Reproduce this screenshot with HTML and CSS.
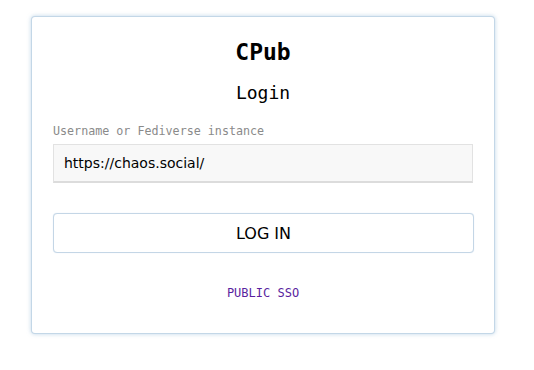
FILE: index.html
```html
<!DOCTYPE html>
<html>
<head>
<meta charset="utf-8">
<link rel="stylesheet" href="styles.css">
</head>
<body>
<div class="card">
  <h1 class="title">CPub</h1>
  <h2 class="subtitle">Login</h2>
  <form class="form">
    <label class="label" for="u">Username or Fediverse instance</label>
    <input class="input" id="u" type="text" value="https://chaos.social/">
    <button class="btn" type="button">LOG IN</button>
  </form>
  <a class="sso" href="#">PUBLIC SSO</a>
</div>
</body>
</html>
```
FILE: styles.css
```css
html, body { margin: 0; padding: 0; background: #fff; }
body { padding: 17px 40px 30px 32px; font-family: "DejaVu Sans", sans-serif; }
.card {
  width: 462px;
  box-sizing: border-box;
  background: #fff;
  border-radius: 3px;
  box-shadow: 0 0 0 1px #c3d7e7, 0 0 4px 1px rgba(140,180,212,0.55);
  padding: 0 21px 32px;
  display: flex;
  flex-direction: column;
  align-items: stretch;
}
.title {
  font-family: "DejaVu Sans Mono", monospace;
  font-weight: bold;
  font-size: 23px;
  text-align: center;
  margin: 21px 0 0;
  line-height: 28px;
  color: #000;
}
.subtitle {
  font-family: "DejaVu Sans Mono", monospace;
  font-weight: normal;
  font-size: 18px;
  text-align: center;
  margin: 16px 0 0;
  line-height: 22px;
  color: #000;
}
.form { display: flex; flex-direction: column; margin-top: 19px; }
.label {
  font-family: "DejaVu Sans Mono", monospace;
  font-size: 11.7px;
  color: #8a8a8a;
  line-height: 16px;
}
.input {
  margin-top: 5px;
  height: 39px;
  box-sizing: border-box;
  background: #f8f8f8;
  border: 1px solid #e2e2e2;
  border-bottom: 2px solid #dcdcdc;
  padding: 0 10px;
  font-family: "DejaVu Sans", sans-serif;
  font-size: 14px;
  color: #000;
  outline: none;
}
.btn {
  margin-top: 30px;
  height: 40px;
  background: #fff;
  border: 1px solid #c4d6e6;
  border-radius: 4px;
  box-shadow: 0 0 1px #d0e0ee;
  font-family: "DejaVu Sans", sans-serif;
  font-size: 16px;
  color: #000;
  padding: 0;
  width: 421px;
}
.sso {
  margin-top: 32px;
  align-self: center;
  font-family: "DejaVu Sans Mono", monospace;
  font-size: 12px;
  color: #5a1fa0;
  text-decoration: none;
  line-height: 16px;
}
```
